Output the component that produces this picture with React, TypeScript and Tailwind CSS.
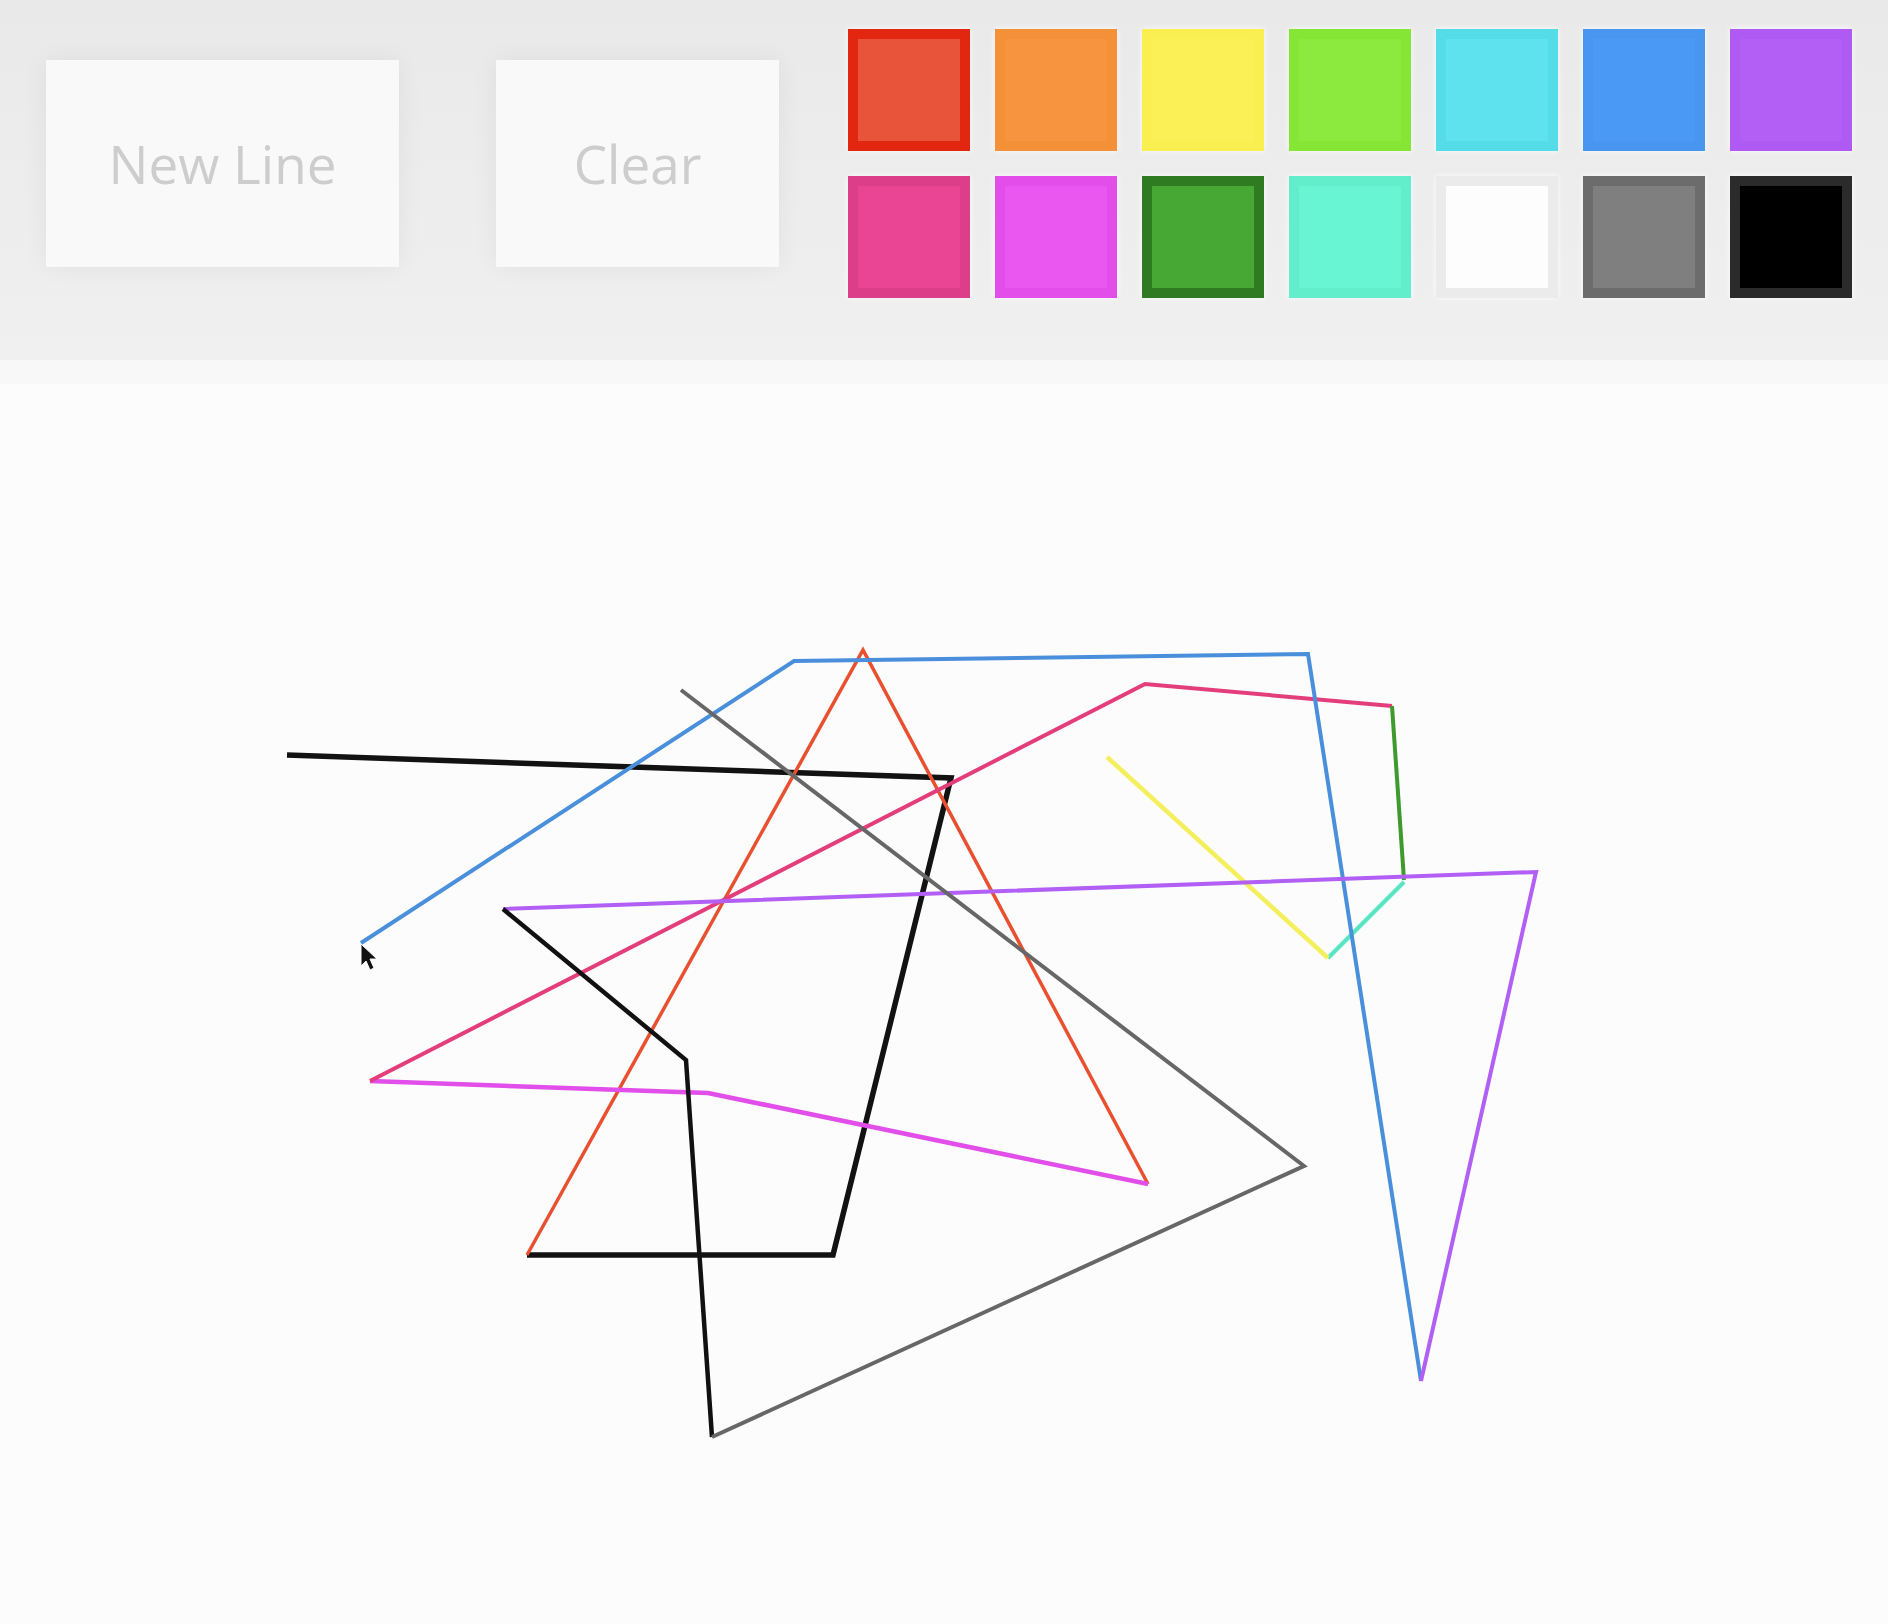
import React from "react";

type Swatch = { fill: string; border: string };

const swatches: Swatch[] = [
  { fill: "bg-[#e8543a]", border: "border-[#e2260f]" },
  { fill: "bg-[#f7943f]", border: "border-[#f49038]" },
  { fill: "bg-[#fbf156]", border: "border-[#f9ef50]" },
  { fill: "bg-[#8bea3d]", border: "border-[#85e635]" },
  { fill: "bg-[#5ee2ed]", border: "border-[#55dce9]" },
  { fill: "bg-[#4a99f5]", border: "border-[#4996f0]" },
  { fill: "bg-[#b35ff6]", border: "border-[#ae5af3]" },
  { fill: "bg-[#ea4494]", border: "border-[#dc3e8a]" },
  { fill: "bg-[#e956f0]", border: "border-[#e34eea]" },
  { fill: "bg-[#47a833]", border: "border-[#2e7b22]" },
  { fill: "bg-[#67f5d3]", border: "border-[#62eecb]" },
  { fill: "bg-[#fdfdfd]", border: "border-[#ebebeb]" },
  { fill: "bg-[#7f7f7f]", border: "border-[#6c6c6c]" },
  { fill: "bg-[#000000]", border: "border-[#2b2b2b]" },
];

type Line = { pts: [number, number][]; color: string; w: number };

const lines: Line[] = [
  { pts: [[287, 755], [951, 778], [833, 1255], [527, 1255]], color: "#121212", w: 5.5 },
  { pts: [[527, 1255], [863, 650], [1148, 1184]], color: "#e8502f", w: 3.5 },
  { pts: [[1148, 1184], [708, 1093], [370, 1081]], color: "#e24ee9", w: 4.5 },
  { pts: [[370, 1081], [1145, 684], [1392, 706]], color: "#e33d7b", w: 4 },
  { pts: [[1392, 706], [1404, 880]], color: "#3e9a2d", w: 4 },
  { pts: [[1404, 882], [1328, 958]], color: "#57e6c4", w: 4 },
  { pts: [[1328, 958], [1107, 757]], color: "#f4ef5c", w: 4.5 },
  { pts: [[361, 943], [794, 661], [1308, 654], [1421, 1381]], color: "#4a8fdc", w: 4 },
  { pts: [[1421, 1381], [1536, 872], [503, 909]], color: "#b15ff5", w: 4 },
  { pts: [[503, 909], [686, 1060], [712, 1437]], color: "#111111", w: 4.5 },
  { pts: [[712, 1437], [1304, 1166], [681, 690]], color: "#676767", w: 4 },
];

export default function App() {
  return (
    <div className="w-[1888px] h-[1624px] bg-[#fcfcfc] flex flex-col overflow-hidden" style={{ fontFamily: '"Open Sans", sans-serif' }}>
      <div className="flex items-start h-[360px] shrink-0 bg-gradient-to-b from-[#e9e9e9] to-[#f0f0f0]">
        <button className="ml-[46px] mt-[60px] w-[353px] h-[207px] bg-[#f9f9f9] shadow-[0_0_24px_rgba(0,0,0,0.06)] text-[53px] text-[#cdcdcd] leading-none flex items-center justify-center">
          New Line
        </button>
        <button className="ml-[97px] mt-[60px] w-[283px] h-[207px] bg-[#f9f9f9] shadow-[0_0_24px_rgba(0,0,0,0.06)] text-[53px] text-[#cdcdcd] leading-none flex items-center justify-center">
          Clear
        </button>
        <div className="ml-[69px] mt-[29px] grid grid-cols-7 gap-[25px]">
          {swatches.map((s, i) => (
            <div
              key={i}
              className={`w-[122px] h-[122px] border-[10px] ${s.fill} ${s.border} shadow-[0_0_6px_rgba(255,255,255,0.9)]`}
            />
          ))}
        </div>
      </div>
      <div className="relative flex-1">
        <div className="h-[24px] bg-[#f8f8f8]" />
        <svg className="absolute left-0 top-0" width="1888" height="1264" viewBox="0 0 1888 1264">
          <g transform="translate(0,-360)">
            {lines.map((l, i) => (
              <polyline
                key={i}
                points={l.pts.map((p) => p.join(",")).join(" ")}
                fill="none"
                stroke={l.color}
                strokeWidth={l.w}
                strokeLinejoin="miter"
                strokeLinecap="butt"
              />
            ))}
            <path
              d="M361 944 L361 966 L366 961 L370 970 L374 968 L370 959 L377 959 Z"
              fill="#111"
              stroke="#fcfcfc"
              strokeWidth="1"
            />
          </g>
        </svg>
      </div>
    </div>
  );
}
